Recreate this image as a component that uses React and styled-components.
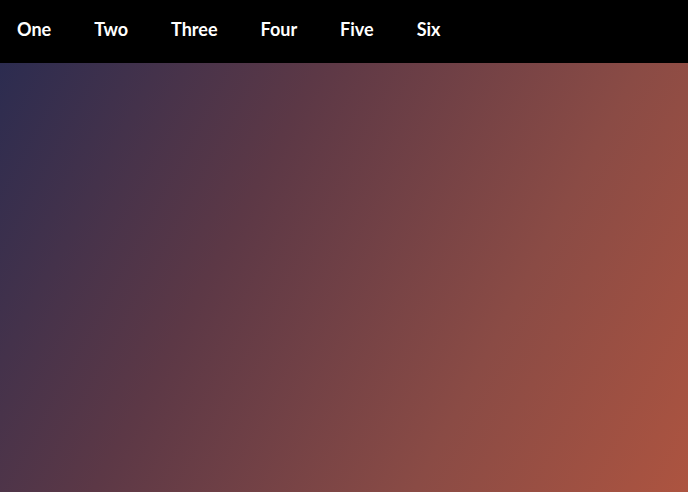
import React from 'react';
import styled, { createGlobalStyle } from 'styled-components';

const GlobalStyle = createGlobalStyle`
  html, body {
    margin: 0;
    padding: 0;
    height: 100%;
  }
  #root {
    height: 100%;
  }
  body {
    font-family: Lato, "Liberation Sans", sans-serif;
  }
`;

const Page = styled.div`
  display: flex;
  flex-direction: column;
  height: 100vh;
`;

const NavBar = styled.nav`
  background: #000;
  height: 63px;
  display: flex;
  align-items: center;
`;

const NavList = styled.ul`
  list-style: none;
  margin: 0;
  padding: 0 0 6px 17px;
  display: flex;
  gap: 43px;
`;

const NavLink = styled.a`
  color: #fff;
  font-weight: 700;
  font-size: 18px;
  text-decoration: none;
  cursor: pointer;
`;

const Hero = styled.main`
  flex: 1;
  background: linear-gradient(118deg, #2c2c50 0%, #5c3846 35%, #8a4b45 70%, #ad5440 100%);
`;

const items = ['One', 'Two', 'Three', 'Four', 'Five', 'Six'];

export default function App() {
  return (
    <>
      <GlobalStyle />
      <Page>
        <NavBar>
          <NavList>
            {items.map((item) => (
              <li key={item}>
                <NavLink>{item}</NavLink>
              </li>
            ))}
          </NavList>
        </NavBar>
        <Hero />
      </Page>
    </>
  );
}
